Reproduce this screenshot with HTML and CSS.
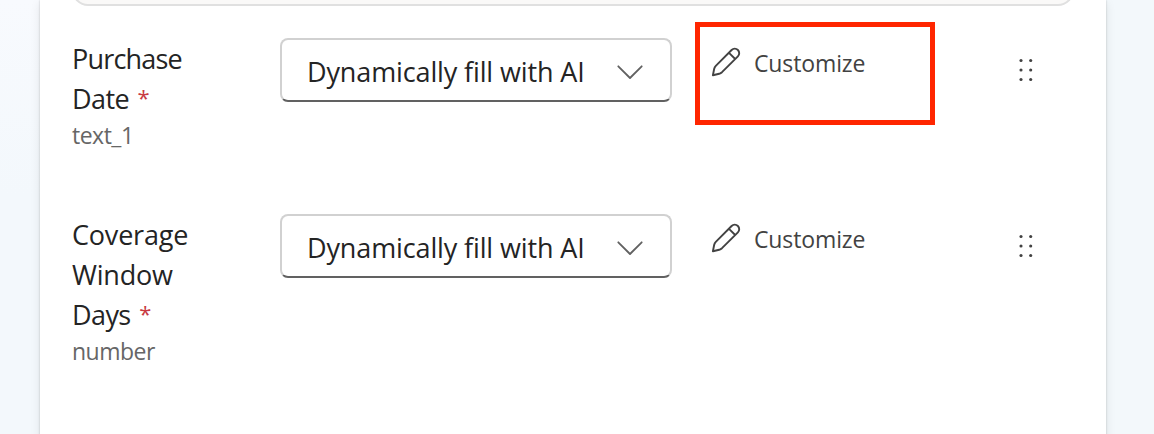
FILE: index.html
```
<!DOCTYPE html>
<html lang="en">
<head>
<meta charset="utf-8">
<title>Inputs</title>
<link rel="stylesheet" href="styles.css">
</head>
<body>
<main class="card">
  <div class="panel"></div>
  <section class="row">
    <div class="field">
      <div class="name"><span class="tight">Purchase</span><br><span class="snug">Date</span> <span class="required">*</span></div>
      <div class="type">text_1</div>
    </div>
    <div class="select">
      <span class="value">Dynamically fill with AI</span>
      <svg class="chevron" width="26" height="16" viewBox="0 0 26 16"><path d="M1.3 1.3 13 13 24.700 1.300"/></svg>
    </div>
    <div class="action highlighted">
      <svg class="pencil" width="30" height="30" viewBox="0 0 30 30"><path d="M20.600 3a4.450 4.450 0 0 1 6.300 6.300L11 25.200Q9.800 26.300 8.200 26.800L1.900 28.200 3.200 21.800Q3.600 20 4.800 18.800ZM18 5.800 24.200 12"/></svg>
      <span class="action-label">Customize</span>
    </div>
    <svg class="grip" width="16" height="24" viewBox="0 0 16 24"><circle cx="3" cy="2.500" r="1.550"/><circle cx="12.700" cy="2.500" r="1.550"/><circle cx="3" cy="12" r="1.550"/><circle cx="12.700" cy="12" r="1.550"/><circle cx="3" cy="21.500" r="1.550"/><circle cx="12.700" cy="21.500" r="1.550"/></svg>
  </section>
  <section class="row">
    <div class="field">
      <div class="name"><span class="wide">Coverage</span><br><span class="wide">Window</span><br><span class="snug">Days</span> <span class="required">*</span></div>
      <div class="type">number</div>
    </div>
    <div class="select">
      <span class="value">Dynamically fill with AI</span>
      <svg class="chevron" width="26" height="16" viewBox="0 0 26 16"><path d="M1.3 1.3 13 13 24.700 1.300"/></svg>
    </div>
    <div class="action">
      <svg class="pencil" width="30" height="30" viewBox="0 0 30 30"><path d="M20.600 3a4.450 4.450 0 0 1 6.300 6.300L11 25.200Q9.800 26.300 8.200 26.800L1.900 28.200 3.200 21.800Q3.600 20 4.800 18.800ZM18 5.800 24.200 12"/></svg>
      <span class="action-label">Customize</span>
    </div>
    <svg class="grip" width="16" height="24" viewBox="0 0 16 24"><circle cx="3" cy="2.500" r="1.550"/><circle cx="12.700" cy="2.500" r="1.550"/><circle cx="3" cy="12" r="1.550"/><circle cx="12.700" cy="12" r="1.550"/><circle cx="3" cy="21.500" r="1.550"/><circle cx="12.700" cy="21.500" r="1.550"/></svg>
  </section>
</main>
</body>
</html>
```
FILE: styles.css
```
* { box-sizing: border-box; }
body {
  margin: 0;
  height: 434px;
  overflow: hidden;
  background: linear-gradient(#f8fafe, #f3f8fb 45%);
  background: linear-gradient(90deg, transparent 50%, #f3f8fb 50%), linear-gradient(#f8fafe, #f3f8fc 45%);
  font-family: "Open Sans", "Noto Sans", sans-serif;
  color: #242424;
}
.card {
  display: flow-root;
  width: 1066px;
  height: 450px;
  margin-left: 40px;
  padding: 0 32px;
  background: #fff;
  box-shadow: 0 0 2px rgba(0, 0, 0, .2), 0 3px 10px rgba(0, 0, 0, .09);
}
.panel {
  height: 40px;
  width: 1002px;
  margin-top: -34px;
  border: 2px solid #e0e0e0;
  border-radius: 16px;
  background: #faf9f8;
}
.row {
  display: grid;
  grid-template-columns: 208px 392px 23px 240px 1fr;
  height: 176px;
  padding-top: 32px;
  align-items: start;
}
.field {
  grid-column: 1;
  padding-top: 1px;
}
.name {
  font-size: 27px;
  line-height: 40px;
  letter-spacing: -.4px;
}
.tight { letter-spacing: -.8px; }
.snug { letter-spacing: -.6px; }
.wide { letter-spacing: -.2px; }
.required {
  margin-left: 2px;
  font-size: 22px;
  line-height: 0;
  vertical-align: 3px;
  color: #c83a42;
}
.type {
  font-size: 23px;
  line-height: 32px;
  letter-spacing: -.5px;
  color: #666;
}
.select {
  grid-column: 2;
  height: 64px;
  display: flex;
  align-items: center;
  padding: 3px 27px 0 25px;
  border: 2px solid #d1d1d1;
  border-bottom-color: #616161;
  border-radius: 8px;
}
.value {
  font-size: 27px;
  line-height: 40px;
  white-space: nowrap;
  letter-spacing: -.13px;
}
.chevron {
  margin: 2px 0 0 auto;
  fill: none;
  stroke: #616161;
  stroke-width: 1.8;
  stroke-linecap: round;
  stroke-linejoin: round;
}
.action {
  grid-column: 4;
  display: flex;
  align-items: flex-start;
  gap: 13px;
  height: 103px;
  margin-top: -16px;
  padding: 20px 0 0 11px;
  border: 5px solid transparent;
  color: #424242;
}
.highlighted { border-color: #ff2600; }
.pencil {
  fill: none;
  stroke: #424242;
  stroke-width: 1.9;
  stroke-linejoin: round;
}
.action-label {
  font-size: 23px;
  line-height: 32px;
  letter-spacing: -.12px;
}
.grip {
  grid-column: 5;
  margin: 20px 0 0 83px;
  fill: #424242;
}
```
